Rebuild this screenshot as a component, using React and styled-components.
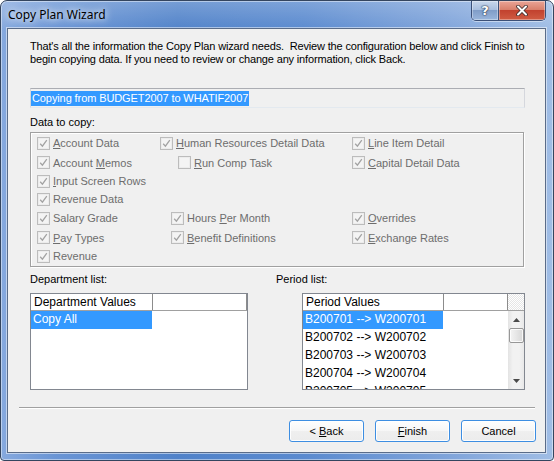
import React from "react";
import styled, { createGlobalStyle } from "styled-components";

const GlobalStyle = createGlobalStyle`
  html, body {
    margin: 0;
    padding: 0;
    background: #fff;
  }
  body {
    font-family: "Liberation Sans", Arial, sans-serif;
    font-size: 11px;
  }
  * {
    box-sizing: border-box;
  }
`;

const Window = styled.div`
  width: 554px;
  height: 461px;
  display: flex;
  flex-direction: column;
  border: 1px solid #34455f;
  border-radius: 7px 7px 4px 4px;
  overflow: hidden;
  background: linear-gradient(180deg, rgba(255, 255, 255, 0.22) 0, rgba(255, 255, 255, 0) 30px),
    linear-gradient(90deg, #86a9de 0%, #6a95d5 10%, #5082c9 32%, #5a8acf 55%, #7ea3da 80%, #a0bde5 100%);
  box-shadow: inset 0 0 0 1px rgba(255, 255, 255, 0.45);
`;

const TitleBar = styled.div`
  height: 27px;
  display: flex;
  align-items: center;
  padding-left: 7px;
  flex-shrink: 0;
`;

const Title = styled.span`
  font-family: "Noto Sans", "Open Sans", sans-serif;
  font-size: 12px;
  color: #000;
  text-shadow: 0 0 10px rgba(255, 255, 255, 0.9), 0 0 6px rgba(255, 255, 255, 0.8);
`;

const CaptionGroup = styled.div`
  display: flex;
  align-self: flex-start;
  margin-left: auto;
  margin-right: 7px;
  border: 1px solid #3b5078;
  border-top: none;
  border-radius: 0 0 5px 5px;
  overflow: hidden;
  box-shadow: 0 1px 0 rgba(255, 255, 255, 0.45);
`;

const CaptionButton = styled.div`
  width: ${(p) => p.$width}px;
  height: 19px;
  display: flex;
  align-items: center;
  justify-content: center;
  background: ${(p) =>
    p.$close
      ? "linear-gradient(#eaa597, #d9806c 45%, #c2422f 50%, #d05c43 100%)"
      : "linear-gradient(#c8d7ec, #a9bfdf 45%, #809dc8 50%, #9ab6dc 100%)"};
  border-right: ${(p) => (p.$close ? "none" : "1px solid #3b5078")};
  box-shadow: inset 0 0 0 1px rgba(255, 255, 255, 0.35);
`;

const HelpGlyph = styled.span`
  font-family: "DejaVu Sans", sans-serif;
  font-weight: bold;
  font-size: 13px;
  color: #fff;
  text-shadow: 0 0 1px #2c3b55, 0 0 1px #2c3b55, 0 0 2px #2c3b55;
`;

const Client = styled.div`
  flex: 1;
  margin: 0 7px 7px 6px;
  border: 1px solid #5a6c88;
  background: #f0f0f0;
  display: flex;
  flex-direction: column;
  padding: 11px 0 0 22px;
  box-shadow: 0 0 0 1px rgba(255, 255, 255, 0.5);
`;

const Intro = styled.p`
  margin: 0;
  font-size: 11px;
  line-height: 13px;
  letter-spacing: -0.16px;
  color: #000;
  white-space: pre;
`;

const Field = styled.div`
  width: 495px;
  height: 20px;
  margin-top: 22px;
  border: 1px solid #abadb3;
  border-color: #abadb3 #d5d7dd #e3e9ef #d5d7dd;
  background: #f0f0f0;
  padding: 1px 0;
  display: flex;
  align-items: center;
`;

const Selected = styled.span`
  background: #3399ff;
  color: #fff;
  line-height: 15px;
  padding: 0 1px;
  letter-spacing: -0.1px;
  white-space: nowrap;
`;

const SectionLabel = styled.div`
  font-size: 11px;
  line-height: 13px;
  color: #000;
  margin-top: ${(p) => p.$top || 0}px;
`;

const Group = styled.div`
  width: 494px;
  margin-top: 3px;
  border: 1px solid #a0a0a0;
  box-shadow: inset 1px 1px 0 #fff, 1px 1px 0 #fff;
  padding: 0 0 1px 6px;
  display: grid;
  grid-template-columns: 123px 192px 1fr;
  grid-template-rows: 20px 19px 18px 18px 20px 19px 18px;
`;

const CheckItem = styled.div`
  grid-column: ${(p) => p.$col};
  grid-row: ${(p) => p.$row};
  display: flex;
  align-items: center;
  margin-left: ${(p) => p.$indent || 0}px;
  color: #6d6d6d;
  white-space: nowrap;
`;

const Box = styled.span`
  width: 13px;
  height: 13px;
  flex: none;
  border: 1px solid #bcbcbc;
  background: #f4f4f4;
  box-shadow: inset 0 0 0 1px #ececec;
  display: flex;
  align-items: center;
  justify-content: center;
  margin-right: 3px;
`;

const ListsRow = styled.div`
  display: grid;
  grid-template-columns: 246px 1fr;
  margin-top: 6px;
`;

const ListColumn = styled.div`
  display: flex;
  flex-direction: column;
`;

const ListView = styled.div`
  width: ${(p) => p.$width}px;
  height: 97px;
  margin-top: 7px;
  margin-left: ${(p) => p.$indent || 0}px;
  border: 1px solid #828790;
  background: #fff;
  display: flex;
  flex-direction: column;
  overflow: hidden;
  font-size: 12px;
  color: #000;
`;

const Header = styled.div`
  height: 17px;
  flex-shrink: 0;
  display: flex;
  border-bottom: 1px solid #a0a0a0;
`;

const HeaderCell = styled.div`
  width: ${(p) => (p.$width ? `${p.$width}px` : "auto")};
  flex: ${(p) => (p.$width ? "none" : 1)};
  border-right: 1px solid #8c8c8c;
  padding-left: 3px;
  line-height: 16px;
  white-space: nowrap;
`;

const HeaderCorner = styled.div`
  width: 16px;
  flex: none;
  background: repeating-conic-gradient(#e6e6e6 0 25%, #fff 0 50%) 0 0 / 2px 2px;
`;

const ListBody = styled.div`
  flex: 1;
  display: flex;
  overflow: hidden;
`;

const Rows = styled.div`
  flex: 1;
  overflow: hidden;
`;

const Row = styled.div`
  width: ${(p) => p.$width}px;
  height: 18px;
  line-height: 17px;
  padding-left: 2px;
  white-space: nowrap;
  background: ${(p) => (p.$selected ? "#3399ff" : "transparent")};
  color: ${(p) => (p.$selected ? "#fff" : "#000")};
`;

const ScrollBar = styled.div`
  width: 16px;
  flex: none;
  display: flex;
  flex-direction: column;
  background: linear-gradient(90deg, #e3e3e3, #f2f2f2 30%, #f2f2f2 70%, #e8e8e8);
`;

const Arrow = styled.div`
  height: 17px;
  flex: none;
  display: flex;
  align-items: center;
  justify-content: center;
`;

const Thumb = styled.div`
  height: 15px;
  margin: 0 0 0 1px;
  border: 1px solid #979797;
  border-radius: 2px;
  background: linear-gradient(90deg, #f4f4f4, #e6e6e6 50%, #d7d7d7);
  box-shadow: inset 0 0 0 1px rgba(255, 255, 255, 0.8);
`;

const Track = styled.div`
  flex: 1;
`;

const Separator = styled.div`
  width: 516px;
  margin: 17px 0 0 -11px;
  border-top: 1px solid #a0a0a0;
  border-bottom: 1px solid #fff;
`;

const ButtonRow = styled.div`
  width: 506px;
  margin-top: 11px;
  display: flex;
  justify-content: flex-end;
  gap: 11px;
`;

const Button = styled.button`
  width: 75px;
  height: 22px;
  padding: 0;
  font-family: "Liberation Sans", Arial, sans-serif;
  font-size: 11px;
  color: #000;
  border: 1px solid #3d8ee2;
  border-radius: 3px;
  background: linear-gradient(#fefefe, #f6f6f6 50%, #efefef 50%, #ececec);
  box-shadow: inset 0 0 0 1px rgba(255, 255, 255, 0.9);
`;

const CheckMark = () => (
  <svg width="9" height="9" viewBox="0 0 9 9">
    <path d="M1.2 4.8 L3.4 7.2 L7.8 1.2" fill="none" stroke="#a3a3a3" strokeWidth="1.3" />
  </svg>
);

const Check = ({ row, col, indent, checked = true, children }) => (
  <CheckItem $row={row} $col={col} $indent={indent}>
    <Box>{checked && <CheckMark />}</Box>
    <span>{children}</span>
  </CheckItem>
);

const UpArrow = () => (
  <svg width="7" height="4" viewBox="0 0 7 4">
    <polygon points="3.5,0 7,4 0,4" fill="#4a4a4a" />
  </svg>
);

const DownArrow = () => (
  <svg width="7" height="4" viewBox="0 0 7 4">
    <polygon points="0,0 7,0 3.5,4" fill="#4a4a4a" />
  </svg>
);

const CloseGlyph = () => (
  <svg width="12" height="11" viewBox="0 0 12 11">
    <path d="M2 1.5 L10 9.5 M10 1.5 L2 9.5" stroke="#3a2a2a" strokeWidth="3.6" strokeLinecap="round" />
    <path d="M2 1.5 L10 9.5 M10 1.5 L2 9.5" stroke="#fff" strokeWidth="2" strokeLinecap="round" />
  </svg>
);

const periods = ["01", "02", "03", "04", "05"];

const App = () => (
  <>
    <GlobalStyle />
    <Window>
      <TitleBar>
        <Title>Copy Plan Wizard</Title>
        <CaptionGroup>
          <CaptionButton $width={27}>
            <HelpGlyph>?</HelpGlyph>
          </CaptionButton>
          <CaptionButton $width={46} $close>
            <CloseGlyph />
          </CaptionButton>
        </CaptionGroup>
      </TitleBar>

      <Client>
        <Intro>
          {"That's all the information the Copy Plan wizard needs.  Review the configuration below and click Finish to\nbegin copying data. If you need to review or change any information, click Back."}
        </Intro>

        <Field>
          <Selected>Copying from BUDGET2007 to WHATIF2007</Selected>
        </Field>

        <SectionLabel $top={8}>Data to copy:</SectionLabel>
        <Group>
          <Check row={1} col={1}>
            <u>A</u>ccount Data
          </Check>
          <Check row={1} col={2}>
            <u>H</u>uman Resources Detail Data
          </Check>
          <Check row={1} col={3}>
            <u>L</u>ine Item Detail
          </Check>
          <Check row={2} col={1}>
            Account <u>M</u>emos
          </Check>
          <Check row={2} col={2} indent={18} checked={false}>
            <u>R</u>un Comp Task
          </Check>
          <Check row={2} col={3}>
            <u>C</u>apital Detail Data
          </Check>
          <Check row={3} col={1}>
            <u>I</u>nput Screen Rows
          </Check>
          <Check row={4} col={1}>
            Revenue Data
          </Check>
          <Check row={5} col={1}>
            Salary Grade
          </Check>
          <Check row={5} col={2} indent={11}>
            Hours <u>P</u>er Month
          </Check>
          <Check row={5} col={3}>
            <u>O</u>verrides
          </Check>
          <Check row={6} col={1}>
            <u>P</u>ay Types
          </Check>
          <Check row={6} col={2} indent={11}>
            <u>B</u>enefit Definitions
          </Check>
          <Check row={6} col={3}>
            <u>E</u>xchange Rates
          </Check>
          <Check row={7} col={1}>
            Revenue
          </Check>
        </Group>

        <ListsRow>
          <ListColumn>
            <SectionLabel>Department list:</SectionLabel>
            <ListView $width={218}>
              <Header>
                <HeaderCell $width={122}>Department Values</HeaderCell>
                <HeaderCell />
              </Header>
              <ListBody>
                <Rows>
                  <Row $width={121} $selected>
                    Copy All
                  </Row>
                </Rows>
              </ListBody>
            </ListView>
          </ListColumn>

          <ListColumn>
            <SectionLabel>Period list:</SectionLabel>
            <ListView $width={223} $indent={26}>
              <Header>
                <HeaderCell $width={141}>Period Values</HeaderCell>
                <HeaderCell />
                <HeaderCorner />
              </Header>
              <ListBody>
                <Rows>
                  {periods.map((p, i) => (
                    <Row key={p} $width={140} $selected={i === 0}>
                      {`B2007${p} --> W2007${p}`}
                    </Row>
                  ))}
                </Rows>
                <ScrollBar>
                  <Arrow>
                    <UpArrow />
                  </Arrow>
                  <Thumb />
                  <Track />
                  <Arrow>
                    <DownArrow />
                  </Arrow>
                </ScrollBar>
              </ListBody>
            </ListView>
          </ListColumn>
        </ListsRow>

        <Separator />

        <ButtonRow>
          <Button>
            &lt; <u>B</u>ack
          </Button>
          <Button>
            <u>F</u>inish
          </Button>
          <Button>Cancel</Button>
        </ButtonRow>
      </Client>
    </Window>
  </>
);

export default App;
